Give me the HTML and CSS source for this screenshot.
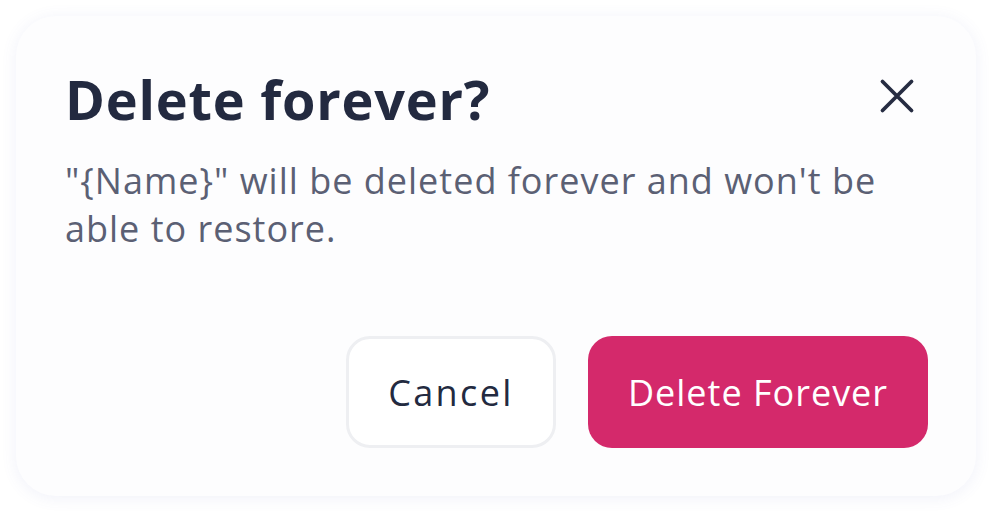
FILE: index.html
```html
<!DOCTYPE html>
<html lang="en">
<head>
  <meta charset="UTF-8">
  <title>Delete forever?</title>
  <link rel="stylesheet" href="styles.css">
</head>
<body>

  <div class="dialog">
    <div class="dialog-head">
      <h2>Delete forever?</h2>
      <button class="close" aria-label="Close">
        <svg width="36" height="36" viewBox="0 0 36 36">
          <path d="M3.5 3.5 L32.5 32.5 M32.5 3.5 L3.5 32.5" stroke="#262c42" stroke-width="3.8" stroke-linecap="round" fill="none"/>
        </svg>
      </button>
    </div>

    <p class="message">"{Name}" will be deleted forever and won't be able to restore.</p>

    <div class="actions">
      <button class="btn btn-cancel">Cancel</button>
      <button class="btn btn-delete">Delete Forever</button>
    </div>
  </div>

</body>
</html>
```

FILE: styles.css
```css
* {
  box-sizing: border-box;
}

body {
  margin: 0;
  padding: 16px;
  background: #ffffff;
  font-family: "Open Sans", "Noto Sans", sans-serif;
}

.dialog {
  width: 960px;
  height: 480px;
  padding: 51px 48px 48px 49px;
  background: #fdfdfe;
  border-radius: 40px;
  box-shadow: 0 2px 16px rgba(90, 100, 190, 0.09);
  display: flex;
  flex-direction: column;
}

.dialog-head {
  display: flex;
  align-items: center;
  justify-content: space-between;
}

h2 {
  margin: 0;
  font-size: 54px;
  line-height: 64px;
  letter-spacing: 0.8px;
  font-weight: 700;
  color: #232a40;
}

.close {
  border: none;
  background: none;
  padding: 0;
  margin: -6px 13px 0 0;
  width: 36px;
  height: 36px;
  cursor: pointer;
}

.close svg {
  display: block;
}

.message {
  margin: 26px 0 0;
  font-size: 36px;
  line-height: 48px;
  letter-spacing: 1px;
  color: #5b6074;
}

.actions {
  margin-top: auto;
  display: flex;
  justify-content: flex-end;
  gap: 32px;
}

.btn {
  height: 112px;
  padding: 0;
  border-radius: 24px;
  font-family: inherit;
  font-size: 36px;
  letter-spacing: 1px;
  font-weight: 500;
  cursor: pointer;
}

.btn-cancel {
  width: 210px;
  background: #ffffff;
  color: #232a40;
  letter-spacing: 2.4px;
  border: 3px solid #eeeff2;
}

.btn-delete {
  width: 340px;
  background: #d4296b;
  color: #ffffff;
  border: none;
}
```
